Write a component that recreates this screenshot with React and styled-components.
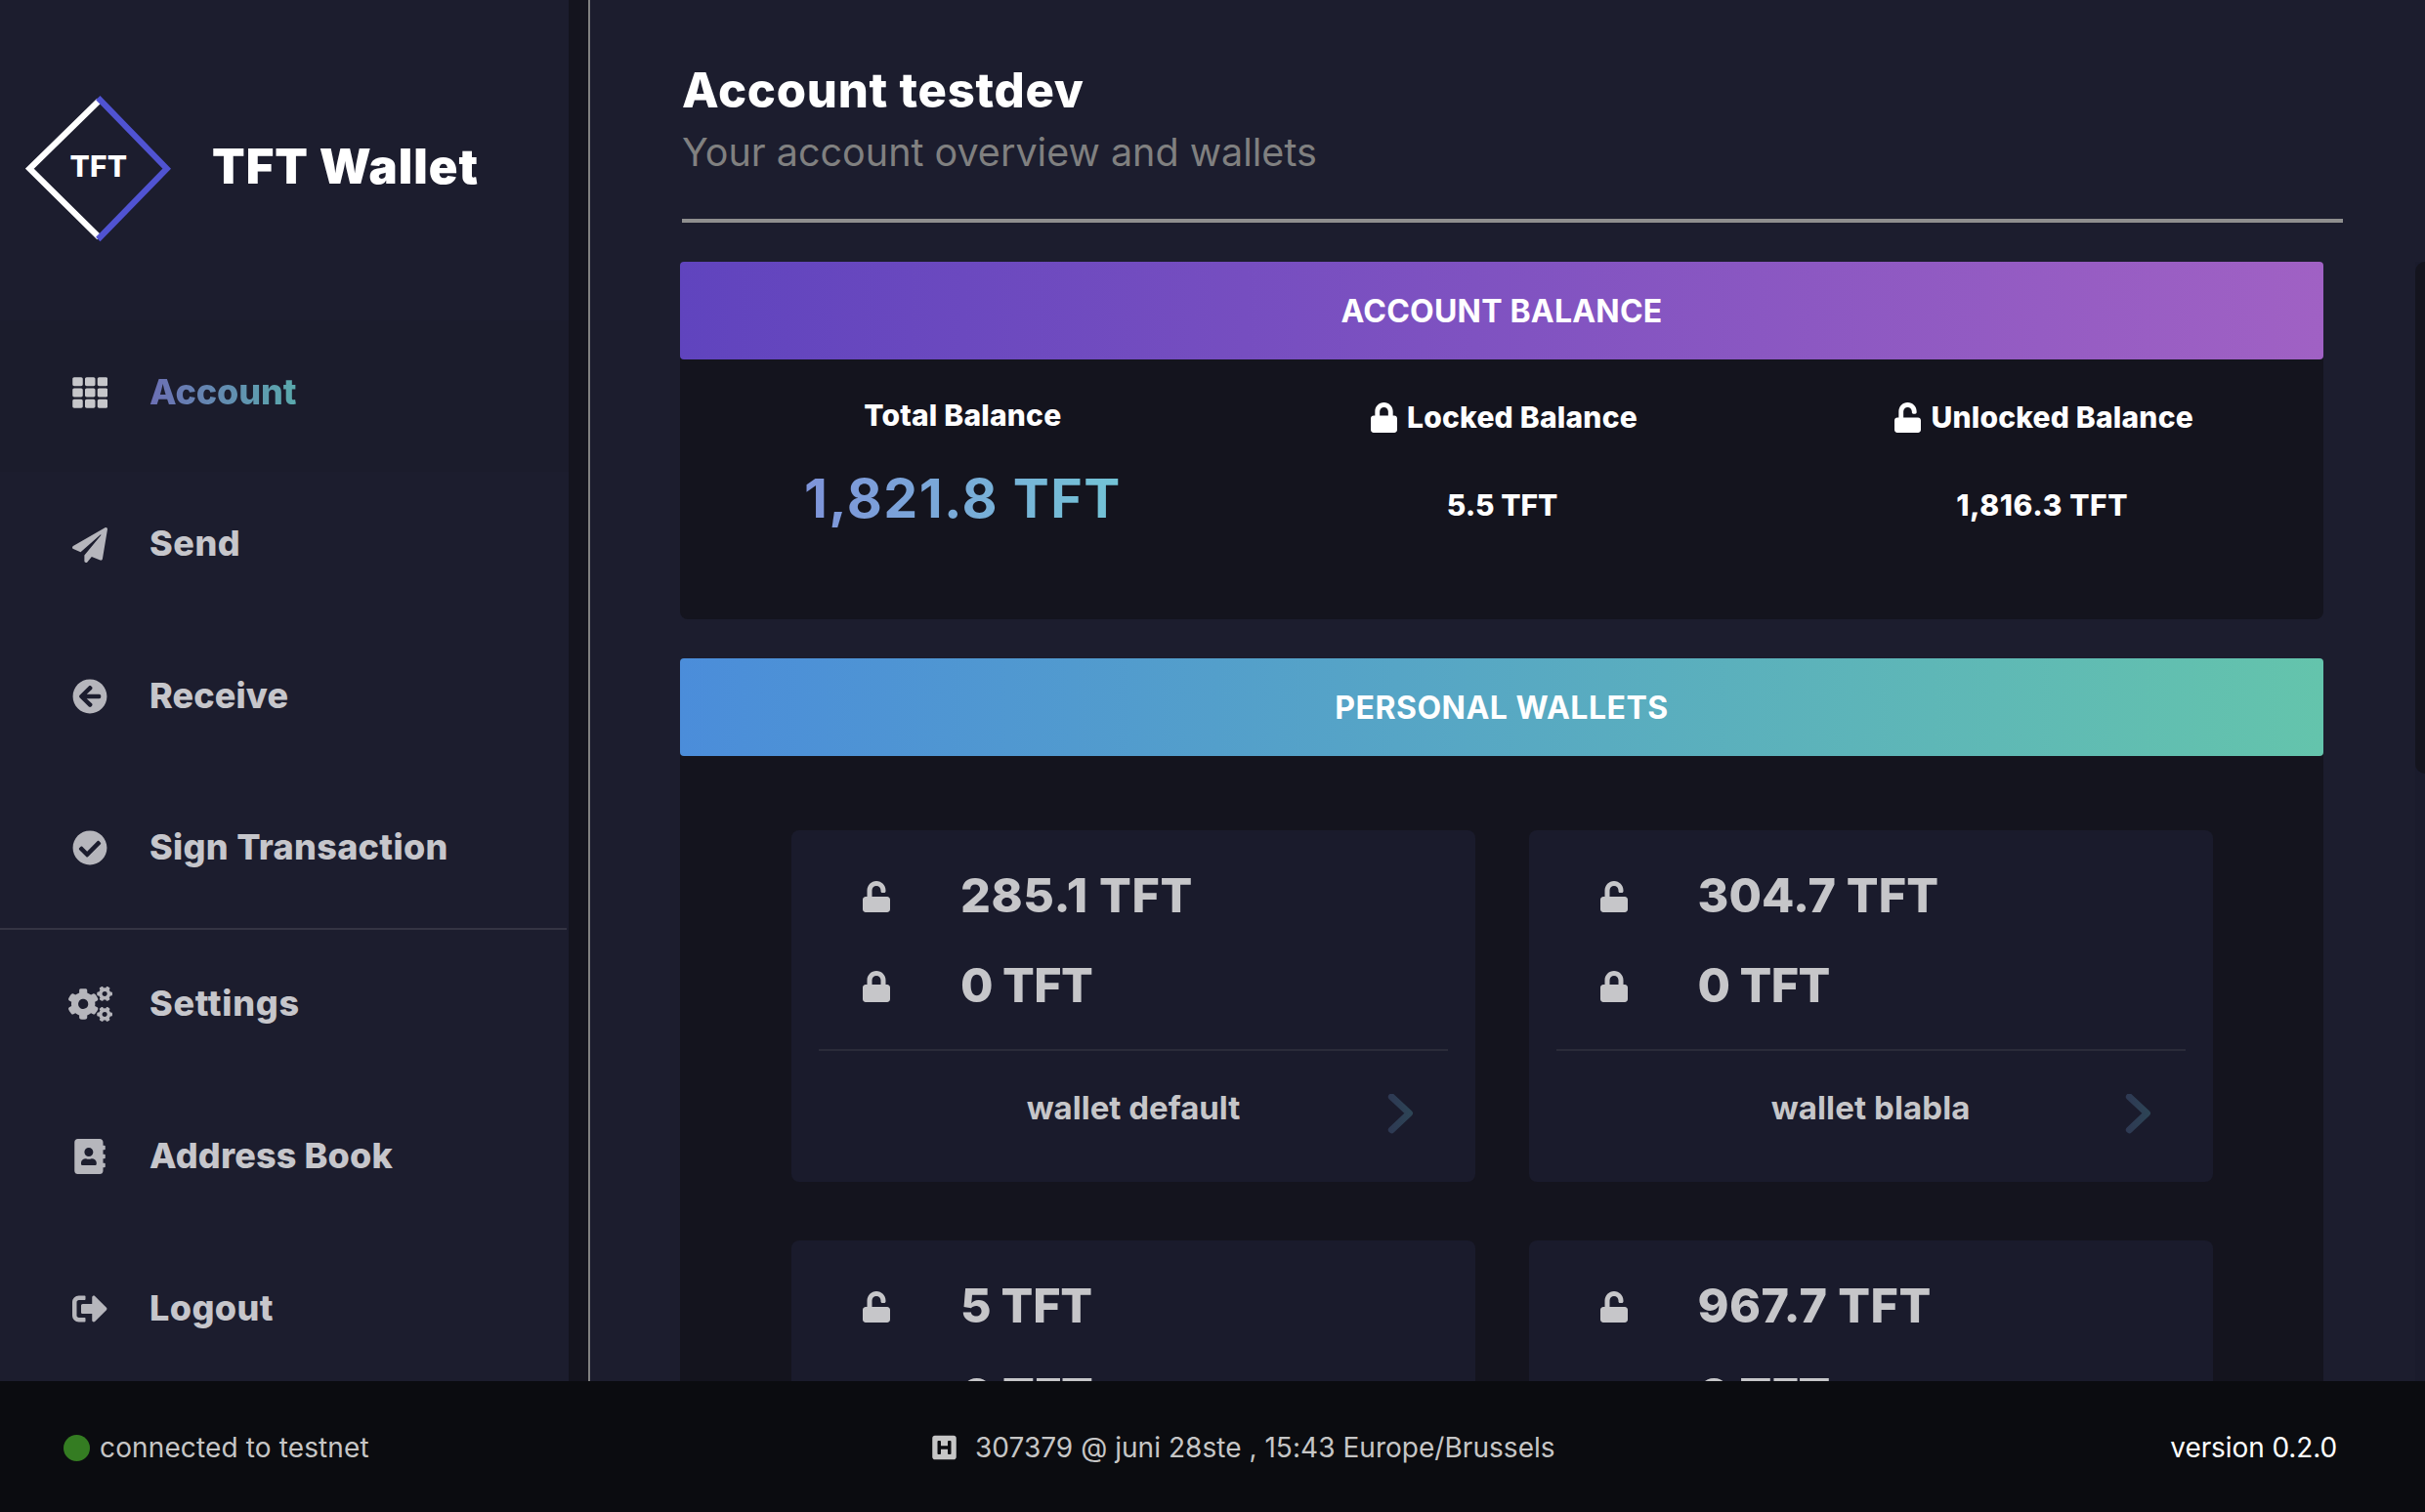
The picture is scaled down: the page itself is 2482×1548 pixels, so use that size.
import React from "react";
import styled, { createGlobalStyle, css } from "styled-components";
import {
  FaTh,
  FaPaperPlane,
  FaArrowCircleLeft,
  FaCheckCircle,
  FaCogs,
  FaAddressBook,
  FaSignOutAlt,
  FaLock,
  FaUnlock,
  FaHSquare,
} from "react-icons/fa";

const GlobalStyle = createGlobalStyle`
  *, *::before, *::after { box-sizing: border-box; }
  body {
    margin: 0;
    overflow: hidden;
    background: #1c1d2e;
    color: #fff;
    font-family: Inter, "Liberation Sans", sans-serif;
  }
  svg { display: block; flex: none; }
`;

const tracking = css`
  letter-spacing: ${(p) => p.$ls || 0}px;
`;

const Page = styled.div`
  height: 100vh;
  display: grid;
  grid-template-rows: minmax(0, 1fr) 134px;
`;

const Workspace = styled.div`
  display: grid;
  grid-template-columns: 604px minmax(0, 1fr);
  overflow: hidden;
`;

/* Sidebar */

const Sidebar = styled.aside`
  background: #1c1d2e;
  border-right: 2px solid #808080;
  display: grid;
  grid-template-columns: 582px 20px;
  overflow: hidden;
`;

const SidebarTrack = styled.div`
  background: #14141e;
`;

const Brand = styled.div`
  height: 327.67px;
  padding: 98px 0 0 26px;
  display: flex;
  align-items: flex-start;
`;

const BrandName = styled.div`
  ${tracking}
  margin: 43px 0 0 41px;
  font-size: 49px;
  line-height: 60px;
  font-weight: 900;
  white-space: nowrap;
`;

const LogoText = styled.text`
  font-size: 30px;
  font-weight: 800;
  letter-spacing: 0.3px;
  fill: #fff;
`;

const NavGroup = styled.nav`
  display: flex;
  flex-direction: column;
`;

const NavItem = styled.a`
  height: ${(p) => p.$height}px;
  padding: 0 0 ${(p) => p.$lift}px 62px;
  display: flex;
  align-items: center;
  gap: 31px;
  background: ${(p) => (p.$active ? "#1b1c2c" : "transparent")};
`;

const NavIcon = styled.span`
  width: 60px;
  padding-top: 3px;
  display: flex;
  justify-content: center;
  font-size: 36px;
  color: ${(p) => (p.$active ? "#c6c6ca" : "#b6b6bc")};

  svg {
    width: ${(p) => p.$width}px;
    height: 36px;
  }
`;

const NavLabel = styled.span`
  ${tracking}
  font-size: 36px;
  line-height: 44px;
  font-weight: 800;
  white-space: nowrap;
  color: #c6c6cb;
  ${(p) =>
    p.$active &&
    css`
      background: linear-gradient(90deg, #6c6fb4, #5aa9ad);
      -webkit-background-clip: text;
      background-clip: text;
      color: transparent;
    `}
`;

const NavDivider = styled.hr`
  width: 580px;
  height: 2px;
  margin: 1px 0 0;
  border: 0;
  background: #343443;
`;

/* Main column */

const Main = styled.main`
  display: flex;
  flex-direction: column;
  overflow: hidden;
`;

const PageHeader = styled.header`
  height: 228px;
  flex: none;
  margin: 0 84px 40px 94px;
  padding-top: 63px;
  border-style: solid;
  border-width: 0 0 4px;
  border-image: linear-gradient(#787878 50%, #8f8f8f 50%) 4;
`;

const Title = styled.h1`
  ${tracking}
  margin: 0;
  font-size: 49px;
  line-height: 60px;
  font-weight: 800;
`;

const Subtitle = styled.p`
  margin: 8px 0 0;
  font-size: 39.5px;
  line-height: 50px;
  color: #808080;
`;

const ScrollArea = styled.div`
  flex: 1;
  min-height: 0;
  display: grid;
  grid-template-columns: 1682px 10px;
  justify-content: space-between;
  padding-left: 92px;
  overflow: hidden;
`;

const Panels = styled.div`
  display: flex;
  flex-direction: column;
  gap: 40px;
`;

const ScrollTrack = styled.div`
  background: #1a1b2c;
`;

const ScrollThumb = styled.div`
  height: 524px;
  border-radius: 10px 0 0 10px;
  background: #14141e;
`;

const Panel = styled.section`
  flex: none;
  background: #14141e;
  border-radius: 4px 4px 8px 8px;
`;

const Banner = styled.h2`
  ${tracking}
  height: 100px;
  margin: 0;
  padding-top: 1px;
  display: flex;
  align-items: center;
  justify-content: center;
  border-radius: 4px;
  font-size: 32px;
  font-weight: 700;
  background: linear-gradient(90deg, ${(p) => p.$from}, ${(p) => p.$to});
`;

const Balances = styled.div`
  height: 266px;
  padding: 0 12px;
  display: grid;
  grid-template-columns: repeat(3, 1fr);
`;

const Balance = styled.div`
  padding: ${(p) => (p.$primary ? 37 : 39)}px 0 0 ${(p) => (p.$primary ? 2 : 1)}px;
  display: flex;
  flex-direction: column;
  align-items: center;
`;

const BalanceLabel = styled.div`
  ${tracking}
  height: 40px;
  padding-left: ${(p) => p.$indent || 0}px;
  display: flex;
  align-items: center;
  gap: 10px;
  font-size: 30px;
  font-weight: 800;
  white-space: nowrap;

  svg {
    width: 27px;
    height: 31px;
  }
`;

const BalanceAmount = styled.div`
  ${tracking}
  margin-top: 50px;
  font-size: 30px;
  line-height: 40px;
  font-weight: 800;
`;

const TotalAmount = styled.div`
  ${tracking}
  margin-top: 35px;
  font-size: 55.5px;
  line-height: 60px;
  font-weight: 700;
  background: linear-gradient(90deg, #7f94da, #73c4d6);
  -webkit-background-clip: text;
  background-clip: text;
  color: transparent;
`;

const WalletGrid = styled.div`
  padding: 76px 114px;
  display: grid;
  grid-template-columns: repeat(2, 700px);
  gap: 60px 54.6px;
`;

const WalletCard = styled.article`
  height: 360px;
  padding-top: 21px;
  border-radius: 8px;
  background: #1a1b2c;
  color: #c6c6c9;
`;

const WalletRow = styled.div`
  height: 92px;
  padding-left: 73px;
  display: flex;
  align-items: center;

  svg {
    width: 28px;
    height: 32px;
    margin: 2px 72px 0 0;
  }
`;

const WalletAmount = styled.span`
  ${tracking}
  font-size: 48.5px;
  line-height: 60px;
  font-weight: 800;
  white-space: nowrap;
`;

const WalletFooter = styled.div`
  margin: 19px 28px 0;
  padding: 34px 35px 0;
  border-top: 2px solid #2a2b39;
  display: grid;
  grid-template-columns: 1fr auto 1fr;
`;

const WalletName = styled.span`
  ${tracking}
  grid-column: 2;
  font-size: 33px;
  line-height: 48px;
  font-weight: 700;
`;

const ChevronSvg = styled.svg`
  margin-top: 10px;
  justify-self: end;
`;

/* Status bar */

const StatusBar = styled.footer`
  background: #0b0c10;
  padding: 2px 90px 0 65px;
  display: grid;
  grid-template-columns: 889px auto 1fr;
  align-items: center;
  font-size: 28px;
  color: #c6c6c6;
`;

const StatusItem = styled.div`
  ${tracking}
  display: flex;
  align-items: center;
  gap: ${(p) => p.$gap || 0}px;
  white-space: nowrap;

  svg {
    width: 25px;
    height: 28px;
  }
`;

const StatusDot = styled.span`
  width: 27px;
  height: 27px;
  border-radius: 50%;
  background: #347c22;
`;

const Version = styled.div`
  ${tracking}
  justify-self: end;
  color: #fff;
`;

const Logo = () => (
  <svg width="150" height="150" viewBox="26 98 150 150" fill="none">
    <path d="M101.5 103 L30.3 172.7 L101.5 243" stroke="#fff" strokeWidth="6.2" />
    <path d="M100.3 100.2 L170.7 172.7 L100.3 245" stroke="#5053d2" strokeWidth="6.2" />
    <LogoText x="71.4" y="181.3">TFT</LogoText>
  </svg>
);

const Chevron = () => (
  <ChevronSvg width="27" height="41" viewBox="0 0 27 41" fill="none">
    <defs>
      <linearGradient id="chevron" x1="0" y1="0" x2="27" y2="0" gradientUnits="userSpaceOnUse">
        <stop offset="0" stopColor="#2e3853" />
        <stop offset="1" stopColor="#2d4656" />
      </linearGradient>
    </defs>
    <path
      d="M4.4 3 L22.4 19.7 L4.4 36.7"
      stroke="url(#chevron)"
      strokeWidth="7"
      strokeLinecap="round"
      strokeLinejoin="round"
    />
  </ChevronSvg>
);

const primaryNav = [
  { label: "Account", Icon: FaTh, width: 36.5, ls: -0.1, active: true },
  { label: "Send", Icon: FaPaperPlane, width: 36, ls: 0.5 },
  { label: "Receive", Icon: FaArrowCircleLeft, width: 36, ls: 0.1 },
  { label: "Sign Transaction", Icon: FaCheckCircle, width: 36, ls: 0.3 },
];

const secondaryNav = [
  { label: "Settings", Icon: FaCogs, width: 45, ls: 0.7 },
  { label: "Address Book", Icon: FaAddressBook, width: 32, ls: 0.15 },
  { label: "Logout", Icon: FaSignOutAlt, width: 36, ls: 0.4 },
];

const wallets = [
  { unlocked: "285.1 TFT", ls: 0.6, name: "wallet default", nameLs: 0 },
  { unlocked: "304.7 TFT", ls: 0.05, name: "wallet blabla", nameLs: 0.1 },
  { unlocked: "5 TFT", ls: -0.3 },
  { unlocked: "967.7 TFT", ls: 0.4 },
];

const NavList = ({ items, height, lift }) => (
  <NavGroup>
    {items.map(({ label, Icon, width, ls, active }) => (
      <NavItem key={label} $height={height} $lift={lift} $active={active}>
        <NavIcon $width={width} $active={active}>
          <Icon />
        </NavIcon>
        <NavLabel $ls={ls} $active={active}>{label}</NavLabel>
      </NavItem>
    ))}
  </NavGroup>
);

const Wallet = ({ unlocked, ls, name, nameLs }) => (
  <WalletCard>
    <WalletRow>
      <FaUnlock />
      <WalletAmount $ls={ls}>{unlocked}</WalletAmount>
    </WalletRow>
    <WalletRow>
      <FaLock />
      <WalletAmount $ls={-0.6}>0 TFT</WalletAmount>
    </WalletRow>
    {name && (
      <WalletFooter>
        <WalletName $ls={nameLs}>{name}</WalletName>
        <Chevron />
      </WalletFooter>
    )}
  </WalletCard>
);

export default function App() {
  return (
    <Page>
      <GlobalStyle />
      <Workspace>
        <Sidebar>
          <div>
            <Brand>
              <Logo />
              <BrandName $ls={1}>TFT Wallet</BrandName>
            </Brand>
            <NavList items={primaryNav} height={155.33} lift={8.7} />
            <NavDivider />
            <NavList items={secondaryNav} height={156} lift={6} />
          </div>
          <SidebarTrack />
        </Sidebar>
        <Main>
          <PageHeader>
            <Title $ls={0.75}>Account testdev</Title>
            <Subtitle>Your account overview and wallets</Subtitle>
          </PageHeader>
          <ScrollArea>
            <Panels>
              <Panel>
                <Banner $from="#6044be" $to="#a061c4" $ls={0.2}>ACCOUNT BALANCE</Banner>
                <Balances>
                  <Balance $primary>
                    <BalanceLabel $ls={0.2}>Total Balance</BalanceLabel>
                    <TotalAmount $ls={1.45}>1,821.8 TFT</TotalAmount>
                  </Balance>
                  <Balance>
                    <BalanceLabel $indent={4} $ls={0.22}>
                      <FaLock />
                      Locked Balance
                    </BalanceLabel>
                    <BalanceAmount $ls={-0.05}>5.5 TFT</BalanceAmount>
                  </Balance>
                  <Balance>
                    <BalanceLabel $indent={4} $ls={0.2}>
                      <FaUnlock />
                      Unlocked Balance
                    </BalanceLabel>
                    <BalanceAmount $ls={0.6}>1,816.3 TFT</BalanceAmount>
                  </Balance>
                </Balances>
              </Panel>
              <Panel>
                <Banner $from="#4b8dda" $to="#64c4ac" $ls={0.5}>PERSONAL WALLETS</Banner>
                <WalletGrid>
                  {wallets.map((wallet) => (
                    <Wallet key={wallet.unlocked} {...wallet} />
                  ))}
                </WalletGrid>
              </Panel>
            </Panels>
            <ScrollTrack>
              <ScrollThumb />
            </ScrollTrack>
          </ScrollArea>
        </Main>
      </Workspace>
      <StatusBar>
        <StatusItem $gap={10} $ls={0.13}>
          <StatusDot />
          connected to testnet
        </StatusItem>
        <StatusItem $gap={19} $ls={0.04}>
          <FaHSquare />
          307379 @ juni 28ste , 15:43 Europe/Brussels
        </StatusItem>
        <Version $ls={-0.1}>version 0.2.0</Version>
      </StatusBar>
    </Page>
  );
}
